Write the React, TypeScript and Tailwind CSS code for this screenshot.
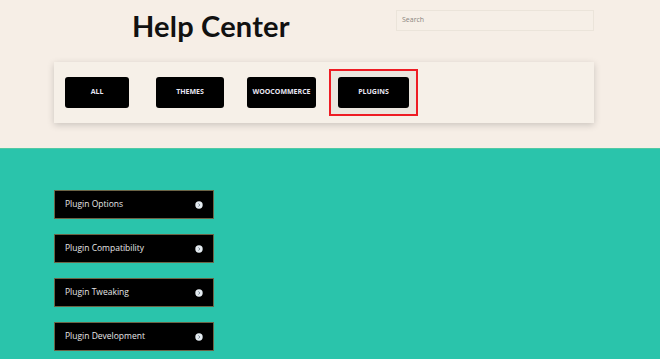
const categories = [
  { label: "ALL", width: "w-[64px]", gap: "" },
  { label: "THEMES", width: "w-[68px]", gap: "ml-[27px]" },
  { label: "WOOCOMMERCE", width: "w-[69px]", gap: "ml-[23px]" },
  { label: "PLUGINS", width: "w-[71px]", gap: "ml-[13px]", active: true },
]

const topics = ["Plugin Options", "Plugin Compatibility", "Plugin Tweaking", "Plugin Development"]

function CircleArrow() {
  return (
    <svg width="8" height="8" viewBox="0 0 8 8">
      <circle cx="4" cy="4" r="3.7" fill="#e4ebf0" />
      <path d="M3.3 2.4 L4.9 4 L3.3 5.6" stroke="#7b8a96" strokeWidth="1" fill="none" />
    </svg>
  )
}

export default function App() {
  return (
    <div className="w-[660px] h-[359px] overflow-hidden bg-[#2ac4ab] font-['Open_Sans',sans-serif]">
      {/* Header */}
      <section className="h-[149px] bg-[#f6eee6] px-[54px] pt-[10px] border-b border-[#52c9a3]">
        <div className="flex items-start h-[52px]">
          <h1 className="ml-[78px] mt-[1px] text-[29px] leading-[30px] font-bold text-[#111] font-['Lato',sans-serif] tracking-[0.2px]">
            Help Center
          </h1>
          <div className="ml-auto mr-[12px] w-[198px] h-[21px] border border-[#ebe4da] bg-[#f6efe7] flex items-center px-[5px]">
            <span className="text-[7px] text-[#8a8580]">Search</span>
          </div>
        </div>
        <div className="h-[61px] w-[540px] bg-[#f6f0e8] shadow-[0_2px_7px_rgba(0,0,0,0.18)] px-[11px] flex items-center">
          {categories.map((c) =>
            c.active ? (
              <div key={c.label} className={`${c.gap} border-2 border-[#ee1c24] bg-[#ebe6df] px-[7px] py-[6px]`}>
                <div className={`${c.width} h-[31px] rounded-[3px] bg-black flex items-center justify-center`}>
                  <span className="text-[7px] font-bold text-[#e8e6f2]">{c.label}</span>
                </div>
              </div>
            ) : (
              <div key={c.label} className={`${c.gap} ${c.width} h-[31px] rounded-[3px] bg-black flex items-center justify-center`}>
                <span className="text-[7px] font-bold text-[#e8e6f2]">{c.label}</span>
              </div>
            )
          )}
        </div>
      </section>

      {/* Topics */}
      <section className="px-[54px] pt-[41px] flex flex-col gap-[15px]">
        {topics.map((t) => (
          <div key={t} className="w-[160px] h-[29px] bg-black border border-[#6b6446] flex items-center justify-between pl-[10px] pr-[10px]">
            <span className="text-[8.5px] text-[#e6e6e6]">{t}</span>
            <CircleArrow />
          </div>
        ))}
      </section>
    </div>
  )
}
